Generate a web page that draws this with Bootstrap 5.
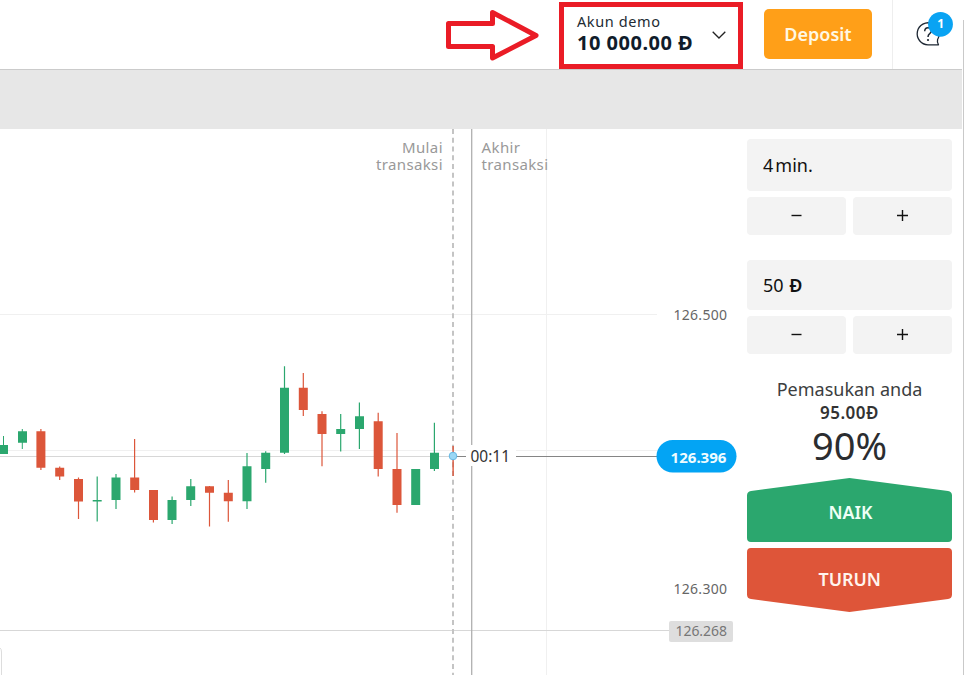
<!DOCTYPE html>
<html lang="id">
<head>
<meta charset="utf-8">
<meta name="viewport" content="width=device-width, initial-scale=1">
<title>Akun demo</title>
<link href="https://cdn.jsdelivr.net/npm/bootstrap@5.3.0/dist/css/bootstrap.min.css" rel="stylesheet">
<style>
body{font-family:"Noto Sans","Open Sans",sans-serif;width:964px;height:675px;overflow:hidden;background:#fff;color:#111}
.topbar{height:70px;width:962px;border-bottom:1px solid #cbcbcb}
.hint-arrow{margin-left:445px;width:95px;height:52px;margin-top:9px}
.account{width:184px;height:67px;margin:2px 0 0 19px;border:5px solid #ea1c26;padding:4px 12px 0 13px;background:#fff}
.account-type{font-size:14.5px;line-height:20px;letter-spacing:.6px;color:#222b33}
.account-sum{font-size:20px;line-height:24px;letter-spacing:.5px;font-weight:700;color:#101c2b;white-space:nowrap}
.chevron{margin-top:20px}
.deposit{width:108px;height:50px;margin:9px 0 0 21px;background:#ff9f18;color:#fff8e4;border:0;border-radius:5px;font-size:18px;font-weight:600;padding:0}
.help{width:70px;height:69px;margin-left:20px;border-left:1px solid #eee}
.strip{height:59px;width:962px;background:#e7e7e7}
.chart{width:738px;height:546px}
.panel{width:224px;height:546px;padding:10px 10px 0 9px}
.field{background:#f3f3f3;border-radius:4px;padding-left:16px;font-size:18px;color:#111}
.field-time{height:52px}
.field-sum{height:50px;margin-top:25px}
.unit{margin-left:2px}
.coin{font-weight:600;margin-left:1px}
.step{height:38px;background:#f3f3f3;border:0;border-radius:4px;padding:0 1px 2px 0;line-height:0}
.steps{gap:7px;margin-top:6px}
.income{font-size:18px;line-height:24px;color:#3c3e40;margin-top:23px}
.gain{font-size:17px;line-height:24px;letter-spacing:.5px;font-weight:600;color:#333}
.rate{font-size:38px;line-height:42px;color:#2b2d30;margin-top:-1px}
.trade{height:64px;font-size:18px;font-weight:600}
.trade-up{margin-top:12px}
.trade-down{margin-top:6px}
.edge{width:1px;height:655px;top:20px;left:963px;background:#c9c9c9}
</style>
<script src="https://cdn.jsdelivr.net/npm/bootstrap@5.3.0/dist/js/bootstrap.bundle.min.js"></script>
</head>
<body class="position-relative">
<header class="topbar d-flex align-items-start">
  <svg class="hint-arrow flex-shrink-0" viewBox="445 9 95 52"><path d="M448.500 23.500H492.500V12.500L536 35.500L492.500 58V46.500H448.500Z" fill="#fff" stroke="#ea1c26" stroke-width="5" stroke-linejoin="round"/></svg>
  <div class="account d-flex justify-content-between flex-shrink-0">
    <div><div class="account-type">Akun demo</div><div class="account-sum">10 000.00 Đ</div></div>
    <svg class="chevron flex-shrink-0" width="14" height="8" viewBox="0 0 14 8"><path d="M.7.7 7 7 13.300.7" fill="none" stroke="#222" stroke-width="1.300"/></svg>
  </div>
  <button class="deposit btn flex-shrink-0">Deposit</button>
  <div class="help flex-shrink-0">
    <svg width="69" height="69" viewBox="893 0 69 69"><path d="M938.500 44.800H928A11 11 0 1 1 937.600 39.500Q936.800 42.500 938.500 44.800Z" fill="none" stroke="#1d2733" stroke-width="1.300" stroke-linejoin="round"/><path d="M924.700 31.200Q924.800 27.700 928 27.700Q931.400 27.700 931.400 30.700Q931.400 32.300 929.700 33.600Q928 34.800 928 37" fill="none" stroke="#1d2733" stroke-width="1.500"/><circle cx="928" cy="40" r="1.100" fill="#1d2733"/><circle cx="940.500" cy="24.300" r="12.400" fill="#09a3f3"/><text x="940.700" y="28.300" font-size="12" font-weight="700" fill="#fff" text-anchor="middle">1</text></svg>
  </div>
</header>
<div class="strip"></div>
<main class="d-flex">
  <svg class="chart flex-shrink-0" viewBox="0 129 738 546">
    <g stroke-width="1">
      <path d="M0 314.500H657M0 450.500H657M546.500 129V675" stroke="#f0f0f0"/>
      <path d="M0 456.500H453M0 630.500H669" stroke="#d7d7d7"/>
      <path d="M453 456.500H657" stroke="#858585"/>
      <path d="M471.700 129V675" stroke="#b0b0b0" stroke-width="1.300"/>
    </g>
    <path d="M453 129V675" stroke="#c4c4c4" stroke-width="2" stroke-dasharray="5 3.770"/>
    <rect x="466" y="445" width="50" height="21" fill="#fff"/>
    <g fill="#2ba76e">
      <path d="M3 436h1v18h-1zM21.800 429h1v20h-1zM96.600 476.500h1.200v45h-1.200zM115.400 474h1.200v35h-1.200zM171.500 496.500h1.200v27.500h-1.200zM190.200 479h1.200v27h-1.200zM246.400 453h1.200v56h-1.200zM265.100 451.300h1.200v31.400h-1.200zM283.900 366.300h1.200v87.700h-1.200zM340.100 414h1.200v37.500h-1.200zM358.800 402.500h1.200v46.500h-1.200zM433.800 422.700h1.200v48.300h-1.200z"/>
      <path d="M-1 445h9v9h-9zM18 431.300h9v11.400h-9zM92.700 500h9v1.400h-9zM111.500 477.500h9v22.500h-9zM167.500 500h9v20h-9zM186.200 486.300h9v13.700h-9zM242.500 466.300h9v35h-9zM261.200 452.700h9v16.300h-9zM280 387.700h9v65h-9zM336.200 429h9v5h-9zM355 416.300h9v12.700h-9zM411.200 469h9v36h-9zM430 452.700h9v16.300h-9z"/>
    </g>
    <g fill="#dc563a">
      <path d="M40.300 429h1.200v41h-1.200zM59.100 466.500h1.200v13.500h-1.200zM77.900 477.500h1.200v41.500h-1.200zM134 439h1.200v53.500h-1.200zM152.800 490h1.200v32.500h-1.200zM208.900 486h1.200v40.500h-1.200zM227.700 480h1.200v41.700h-1.200zM302.700 373h1.200v43h-1.200zM321.400 411.300h1.200v55h-1.200zM377.600 412.700h1.200v63.800h-1.200zM396.400 433h1.200v79.700h-1.200zM452.400 446h1.400v30h-1.400z"/>
      <path d="M36.400 431.300h9v36.400h-9zM55.200 467.700h9v8.800h-9zM74 479h9v22.500h-9zM130.200 477.500h9v12.500h-9zM149 490h9v30h-9zM205 486.300h9v6.400h-9zM223.800 492.700h9v8.600h-9zM298.800 387.700h9v22.300h-9zM317.500 414h9v20h-9zM373.700 421.300h9v47.700h-9zM392.500 469h9v36h-9z"/>
    </g>
    <circle cx="453" cy="456" r="3.800" fill="#9ad7f5" stroke="#65b8e4" stroke-width="1"/>
    <g font-size="15" fill="#999">
      <text x="402" y="153" textLength="40.500">Mulai</text><text x="376" y="170" textLength="66.500">transaksi</text>
      <text x="481.500" y="153" textLength="38.500">Akhir</text><text x="481.500" y="170" textLength="66.500">transaksi</text>
    </g>
    <text x="470.500" y="462" font-size="16" textLength="39.500" lengthAdjust="spacingAndGlyphs" fill="#333">00:11</text>
    <rect x="656.500" y="440" width="80" height="32.500" rx="16.250" fill="#03a4f4"/>
    <text x="670.500" y="462.500" font-size="15" font-weight="700" textLength="56" lengthAdjust="spacingAndGlyphs" fill="#effcff">126.396</text>
    <rect x="669" y="621" width="64" height="21" rx="2" fill="#dedede"/>
    <g font-size="14" fill="#666"><text x="673.500" y="320" textLength="53.500">126.500</text><text x="673.500" y="594" textLength="53.500">126.300</text><text x="675.500" y="636" textLength="51.500" fill="#777">126.268</text></g>
    <path d="M0 648Q1.500 649 1.500 652V675" fill="none" stroke="#ddd"/>
  </svg>
  <aside class="panel flex-shrink-0">
    <div class="field field-time d-flex align-items-center"><span>4<span class="unit">min.</span></span></div>
    <div class="steps d-flex">
      <button class="step btn flex-fill w-50"><svg width="13" height="13"><path d="M1.500 6.500h10" stroke="#111" stroke-width="1.400"/></svg></button>
      <button class="step btn flex-fill w-50"><svg width="13" height="13"><path d="M1 6.500h11M6.500 1v11" stroke="#111" stroke-width="1.400"/></svg></button>
    </div>
    <div class="field field-sum d-flex align-items-center"><span>50 <span class="coin">Đ</span></span></div>
    <div class="steps d-flex">
      <button class="step btn flex-fill w-50"><svg width="13" height="13"><path d="M1.500 6.500h10" stroke="#111" stroke-width="1.400"/></svg></button>
      <button class="step btn flex-fill w-50"><svg width="13" height="13"><path d="M1 6.500h11M6.500 1v11" stroke="#111" stroke-width="1.400"/></svg></button>
    </div>
    <div class="income text-center">Pemasukan anda</div>
    <div class="gain text-center">95.00Đ</div>
    <div class="rate text-center">90%</div>
    <svg class="trade trade-up d-block" width="205" role="button"><path d="M4 13 102.500 0 201 13Q205 13.500 205 17.500V60Q205 64 201 64H4Q0 64 0 60V17.500Q0 13.500 4 13Z" fill="#2ba76e"/><text x="81.500" y="41" textLength="44" lengthAdjust="spacingAndGlyphs" fill="#effff6">NAIK</text></svg>
    <svg class="trade trade-down d-block" width="205" role="button"><path d="M4 0H201Q205 0 205 4V46.500Q205 50.500 201 51L102.500 64 4 51Q0 50.500 0 46.500V4Q0 0 4 0Z" fill="#de5539"/><text x="71.500" y="38" textLength="62.500" lengthAdjust="spacingAndGlyphs" fill="#fff4ee">TURUN</text></svg>
  </aside>
</main>
<div class="edge position-absolute"></div>
</body>
</html>
